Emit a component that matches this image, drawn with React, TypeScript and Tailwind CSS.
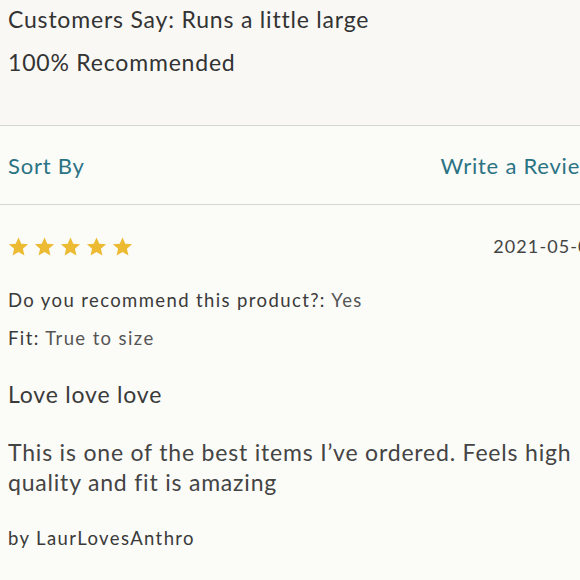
import React from "react";

const font = { fontFamily: "Lato, 'Noto Sans', sans-serif" };

const Star = () => (
  <svg viewBox="0 0 24 24" className="h-[23px] w-[23px]" fill="#ecba33">
    <path d="M12 2.5l2.9 6.6 7.1.6-5.4 4.7 1.6 7-6.2-3.7-6.2 3.7 1.6-7L2 9.7l7.1-.6z" />
  </svg>
);

const App = () => {
  return (
    <div className="h-[580px] w-[580px] overflow-hidden bg-[#fbfbf8]" style={font}>
      <div className="w-[606px]">
        {/* Summary */}
        <div className="h-[126px] border-b border-[#d6d6d3] bg-[#f9f8f4] px-2 pt-[4px] text-[#333]">
          <p className="text-[23px] leading-[30px] tracking-[0.035em]">Customers Say: Runs a little large</p>
          <p className="mt-[13px] text-[23px] leading-[30px] tracking-[0.035em]">100% Recommended</p>
        </div>

        {/* Sort / write */}
        <div className="flex h-[79px] items-center justify-between border-b border-[#d6d6d3] px-2 text-[22px] tracking-[0.035em] text-[#2a7383]">
          <span>Sort By</span>
          <span>Write a Review</span>
        </div>

        {/* Review */}
        <div className="px-2 pt-[30px] text-[#3a3a3a]">
          <div className="flex h-[22px] items-center justify-between">
            <div className="flex gap-[3px] ml-[-1px]">
              <Star />
              <Star />
              <Star />
              <Star />
              <Star />
            </div>
            <span className="mr-[-3px] text-[18px] tracking-[0.06em] text-[#444]">2021-05-06</span>
          </div>
          <p className="mt-[31px] text-[18.5px] leading-[24px] tracking-[0.075em]">
            Do you recommend this product?: <span className="text-[#555]">Yes</span>
          </p>
          <p className="mt-[14px] text-[18.5px] leading-[24px] tracking-[0.075em]">
            Fit: <span className="text-[#555]">True to size</span>
          </p>
          <p className="mt-[29px] text-[23px] leading-[30px] tracking-[0.035em]">Love love love</p>
          <p className="mt-[28px] text-[23px] leading-[30px] tracking-[0.035em] text-[#444]">
            This is one of the best items I’ve ordered. Feels high quality and fit is amazing
          </p>
          <p className="mt-[29px] text-[18.5px] leading-[24px] tracking-[0.075em]">by LaurLovesAnthro</p>
        </div>
      </div>
    </div>
  );
};

export default App;
